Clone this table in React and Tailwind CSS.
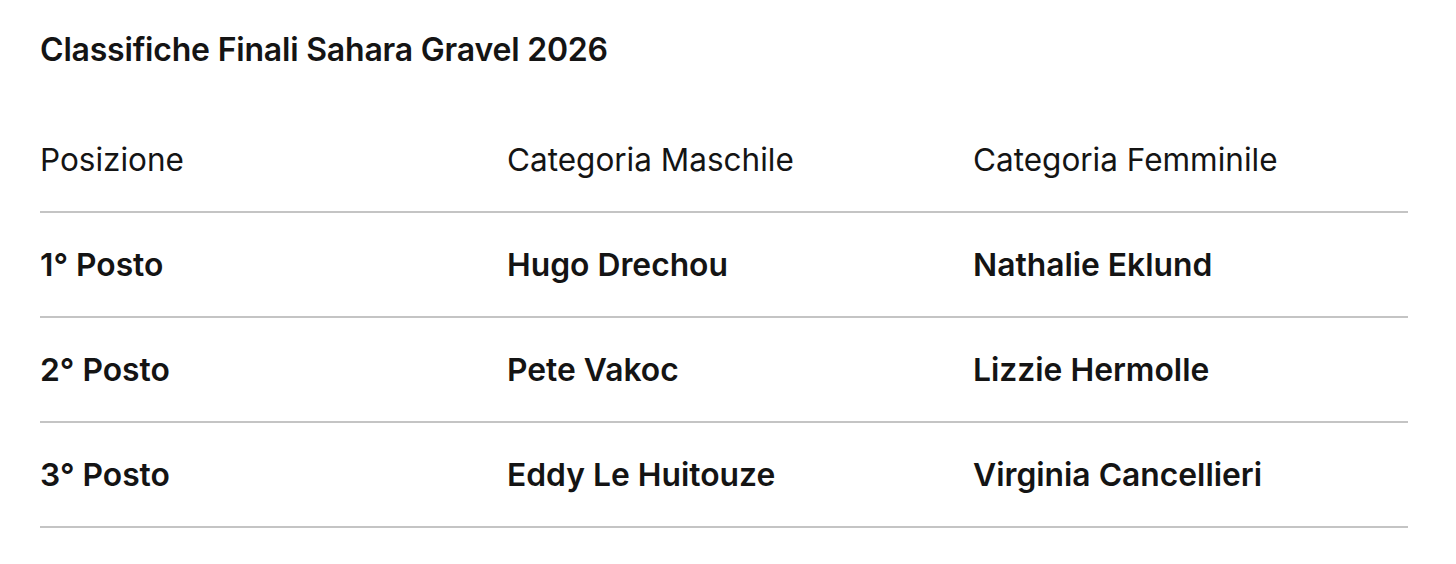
const rows = [
  ["1° Posto", "Hugo Drechou", "Nathalie Eklund"],
  ["2° Posto", "Pete Vakoc", "Lizzie Hermolle"],
  ["3° Posto", "Eddy Le Huitouze", "Virginia Cancellieri"],
];

export default function App() {
  return (
    <div
      className="w-[1456px] h-[564px] bg-white text-[#141414] px-[40px] pt-[30px]"
      style={{ fontFamily: "Inter, 'Noto Sans', sans-serif" }}
    >
      <h1 className="text-[32px] leading-[40px] font-semibold tracking-[-0.2px]">
        Classifiche Finali Sahara Gravel 2026
      </h1>
      <div className="mt-[38px] w-[1368px]">
        <div className="grid grid-cols-[467px_466px_1fr] h-[105px] items-center border-b-2 border-[#c4c4c4] text-[31.5px]">
          <div>Posizione</div>
          <div>Categoria Maschile</div>
          <div>Categoria Femminile</div>
        </div>
        {rows.map((r) => (
          <div
            key={r[0]}
            className="grid grid-cols-[467px_466px_1fr] h-[105px] items-center border-b-2 border-[#c4c4c4] text-[31.8px] font-semibold"
          >
            {r.map((c) => (
              <div key={c}>{c}</div>
            ))}
          </div>
        ))}
      </div>
    </div>
  );
}
